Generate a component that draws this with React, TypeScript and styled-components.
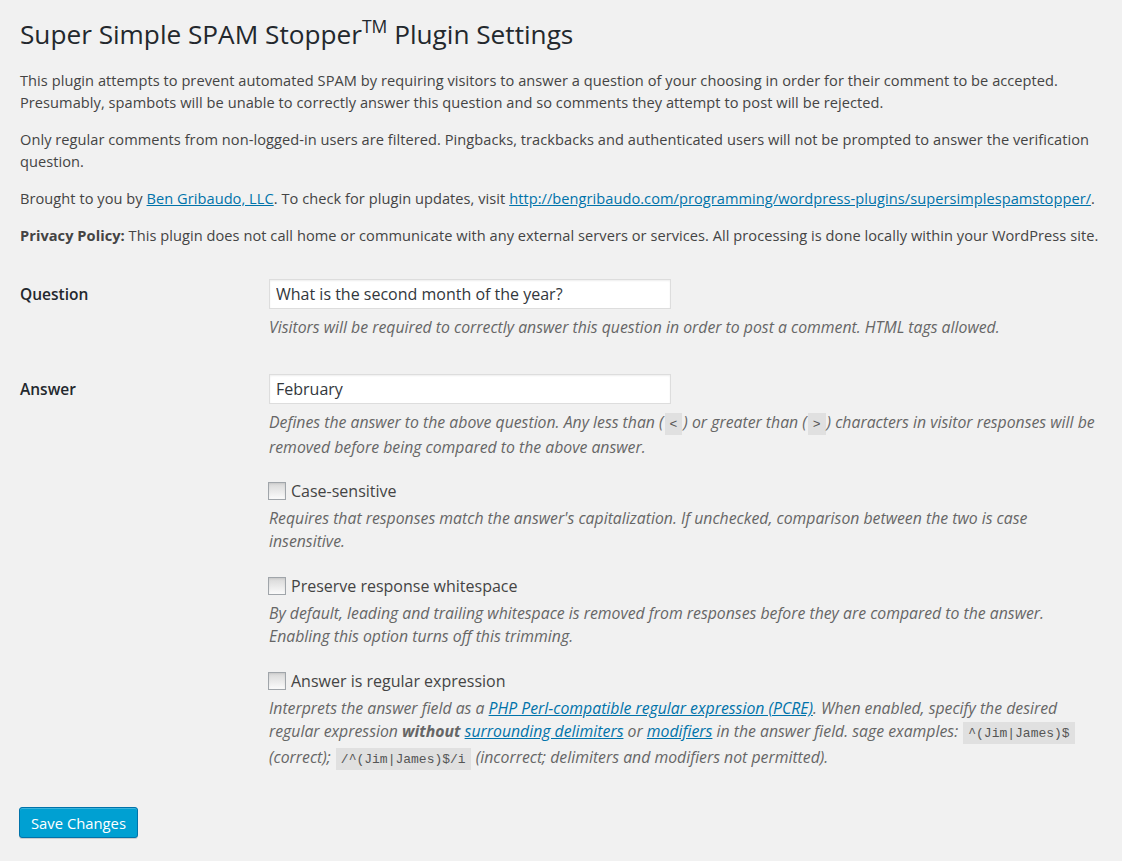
import React from "react";
import styled, { createGlobalStyle } from "styled-components";

const Global = createGlobalStyle`
  html, body { margin: 0; padding: 0; background: #f1f1f1; }
  body {
    font-family: "Open Sans", "Liberation Sans", sans-serif;
    font-size: 14.6px;
    color: #444;
    line-height: 1.5;
  }
`;

const Wrap = styled.div`
  padding: 14px 20px 24px 20px;
`;

const Title = styled.h1`
  font-size: 26.2px;
  font-weight: 400;
  line-height: 32px;
  margin: 4px 0 19px;
  color: #23282d;
  sup { font-size: 17.5px; line-height: 0; position: relative; top: -1px; }
`;

const Para = styled.p`
  margin: 0 0 15px;
  line-height: 22px;
  letter-spacing: 0.05px;
`;

const Link = styled.a`
  color: #0073aa;
  text-decoration: underline;
`;

const Form = styled.div`
  margin-top: 33px;
`;

const Row = styled.div<{ $pad?: number }>`
  display: grid;
  grid-template-columns: 249px 1fr;
  padding: 0 0 ${(p) => p.$pad ?? 0}px;
`;

const Label = styled.div`
  font-weight: 600;
  font-size: 15.5px;
  line-height: 22px;
  color: #23282d;
  padding-top: 4px;
`;

const Field = styled.div`
  display: flex;
  flex-direction: column;
`;

const Input = styled.input`
  width: 402px;
  height: 30px;
  box-sizing: border-box;
  border: 1px solid #ddd;
  box-shadow: inset 0 1px 2px rgba(0, 0, 0, 0.07);
  background: #fff;
  color: #32373c;
  font-family: "Open Sans", "Liberation Sans", sans-serif;
  font-size: 16px;
  padding: 2px 6px;
  margin: 0;
  outline: none;
`;

const Desc = styled.p<{ $gap?: number }>`
  margin: ${(p) => p.$gap ?? 7}px 0 0;
  font-style: italic;
  font-size: 15.8px;
  color: #666;
  line-height: 23.5px;
`;

const CheckLine = styled.label<{ $first?: boolean }>`
  display: flex;
  align-items: center;
  gap: 5px;
  margin-top: ${(p) => (p.$first ? 20 : 21)}px;
  font-size: 16px;
  color: #444;
  line-height: 22px;
`;

const Box = styled.span`
  width: 18px;
  height: 18px;
  box-sizing: border-box;
  border: 1px solid #a0a5aa;
  background: linear-gradient(#d8d8d8, #fbfbfb);
  box-shadow: inset 0 1px 2px rgba(0, 0, 0, 0.08);
  display: inline-block;
  margin-left: -1px;
`;

const Code = styled.code`
  font-family: "Liberation Mono", "DejaVu Sans Mono", monospace;
  font-style: normal;
  font-size: 13px;
  background: #e0e0e0;
  color: #555;
  padding: 4px 5px 3px;
  margin: 0 1px;
`;

const Submit = styled.div`
  margin-top: 36px;
`;

const Button = styled.button`
  background: #00a0d2;
  border: 1px solid #0073aa;
  box-shadow: inset 0 1px 0 rgba(120, 200, 230, 0.5), 0 1px 0 rgba(0, 0, 0, 0.15);
  color: #fff;
  font-family: "Open Sans", "Liberation Sans", sans-serif;
  font-size: 14.8px;
  height: 31px;
  padding: 0 11px;
  border-radius: 3px;
  margin-left: -1px;
  cursor: pointer;
`;

export default function App() {
  return (
    <>
      <Global />
      <Wrap>
        <Title>
          Super Simple SPAM Stopper<sup>TM</sup> Plugin Settings
        </Title>
        <Para>
          This plugin attempts to prevent automated SPAM by requiring visitors to answer a question of your choosing in order for their comment to be accepted. Presumably, spambots will be unable to correctly answer this question and so comments they attempt to post will be rejected.
        </Para>
        <Para>
          Only regular comments from non-logged-in users are filtered. Pingbacks, trackbacks and authenticated users will not be prompted to answer the verification question.
        </Para>
        <Para>
          Brought to you by <Link href="#">Ben Gribaudo, LLC</Link>. To check for plugin updates, visit{" "}
          <Link href="#">http://bengribaudo.com/programming/wordpress-plugins/supersimplespamstopper/</Link>.
        </Para>
        <Para>
          <strong>Privacy Policy:</strong> This plugin does not call home or communicate with any external servers or services. All processing is done locally within your WordPress site.
        </Para>
        <Form>
          <Row $pad={34}>
            <Label>Question</Label>
            <Field>
              <Input defaultValue="What is the second month of the year?" />
              <Desc>Visitors will be required to correctly answer this question in order to post a comment. HTML tags allowed.</Desc>
            </Field>
          </Row>
          <Row>
            <Label>Answer</Label>
            <Field>
              <Input defaultValue="February" />
              <Desc>
                Defines the answer to the above question. Any less than (<Code>&lt;</Code>) or greater than (<Code>&gt;</Code>) characters in visitor responses will be removed before being compared to the above answer.
              </Desc>
              <CheckLine $first>
                <Box />
                Case-sensitive
              </CheckLine>
              <Desc $gap={5}>
                Requires that responses match the answer's capitalization. If unchecked, comparison between the two is case insensitive.
              </Desc>
              <CheckLine>
                <Box />
                Preserve response whitespace
              </CheckLine>
              <Desc $gap={5}>
                By default, leading and trailing whitespace is removed from responses before they are compared to the answer. Enabling this option turns off this trimming.
              </Desc>
              <CheckLine>
                <Box />
                Answer is regular expression
              </CheckLine>
              <Desc $gap={5}>
                Interprets the answer field as a <Link href="#">PHP Perl-compatible regular expression (PCRE)</Link>. When enabled, specify the desired regular expression <strong>without</strong> <Link href="#">surrounding delimiters</Link> or <Link href="#">modifiers</Link> in the answer field. sage examples: <Code>^(Jim|James)$</Code> (correct); <Code>/^(Jim|James)$/i</Code> (incorrect; delimiters and modifiers not permitted).
              </Desc>
            </Field>
          </Row>
        </Form>
        <Submit>
          <Button>Save Changes</Button>
        </Submit>
      </Wrap>
    </>
  );
}
